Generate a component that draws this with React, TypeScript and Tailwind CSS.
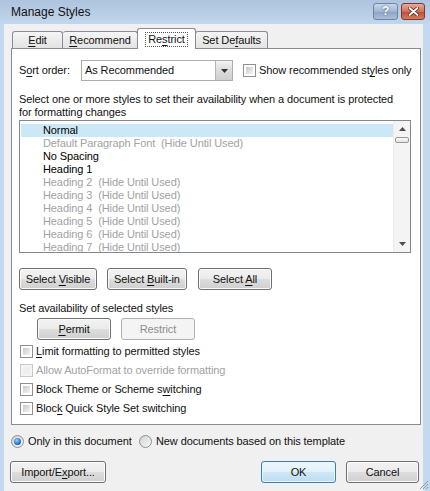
import React from "react"

const btnFace =
  "bg-[linear-gradient(to_bottom,#f3f3f3_0%,#ebebeb_48%,#dddddd_52%,#cfcfcf_100%)] shadow-[inset_0_0_0_1px_#fbfbfb]"

function Btn({
  children,
  w,
  disabled,
  primary,
}: {
  children: React.ReactNode
  w: string
  disabled?: boolean
  primary?: boolean
}) {
  if (disabled) {
    return (
      <div
        className={`${w} h-[22px] flex items-center justify-center rounded-[3px] border border-[#adb2b5] bg-[#f4f4f4] text-[#8d8d8d]`}
      >
        {children}
      </div>
    )
  }
  if (primary) {
    return (
      <div
        className={`${w} h-[22px] flex items-center justify-center rounded-[3px] border border-[#3c7fb1] bg-[linear-gradient(to_bottom,#eef7fc_0%,#e1f1fa_48%,#cfe7f5_52%,#bcdcef_100%)] shadow-[inset_0_0_0_1px_#e6f4fb]`}
      >
        {children}
      </div>
    )
  }
  return (
    <div
      className={`${w} h-[22px] flex items-center justify-center rounded-[3px] border border-[#707070] ${btnFace}`}
    >
      {children}
    </div>
  )
}

function Check({ disabled }: { disabled?: boolean }) {
  return (
    <div
      className={`w-[13px] h-[13px] shrink-0 border ${
        disabled ? "border-[#c9c9c9] bg-[#f4f4f4]" : "border-[#8f8f8f] bg-white"
      } p-[2px]`}
    >
      <div
        className={`w-full h-full ${
          disabled ? "bg-[#eeeeee]" : "bg-[linear-gradient(135deg,#c4c8ce,#f5f5f5)]"
        }`}
      />
    </div>
  )
}

function Radio({ on }: { on?: boolean }) {
  return (
    <div className="w-[13px] h-[13px] shrink-0 rounded-full border border-[#8f8f8f] bg-[linear-gradient(135deg,#d0d3d8,#f6f6f6)] flex items-center justify-center">
      {on && (
        <div className="w-[7px] h-[7px] rounded-full bg-[radial-gradient(circle_at_40%_35%,#8fd3ff,#1b60b8_70%)]" />
      )}
    </div>
  )
}

const U = ({ children }: { children: React.ReactNode }) => (
  <span className="underline underline-offset-[2px]">{children}</span>
)

const items: { name: string; hidden?: boolean }[] = [
  { name: "Normal" },
  { name: "Default Paragraph Font", hidden: true },
  { name: "No Spacing" },
  { name: "Heading 1" },
  { name: "Heading 2", hidden: true },
  { name: "Heading 3", hidden: true },
  { name: "Heading 4", hidden: true },
  { name: "Heading 5", hidden: true },
  { name: "Heading 6", hidden: true },
  { name: "Heading 7", hidden: true },
]

export default function App() {
  return (
    <div className="relative w-[430px] h-[491px] overflow-hidden flex flex-col bg-[#c4d8ee] text-[11px] leading-[13px] tracking-[-0.1px] text-[#111] font-['Liberation_Sans',Arial,sans-serif]">
      {/* Title bar */}
      <div className="h-[24px] shrink-0 flex items-center pl-[11px] pr-[5px] bg-[linear-gradient(to_bottom,#adc4de,#c2d6ec)]">
        <span className="flex-1 text-[12px] tracking-normal">Manage Styles</span>
        <div className="w-[25px] h-[17px] -mt-[2px] rounded-[3px] border border-[#6d839f] bg-[linear-gradient(to_bottom,#c9d8ea,#9fb6d1_50%,#8aa3c3_52%,#a9c0db)] flex items-center justify-center text-white text-[12px] font-bold [text-shadow:0_0_2px_#38506f]">
          ?
        </div>
        <div className="w-[24px] h-[17px] -mt-[2px] ml-[3px] rounded-[3px] border border-[#7a3a2c] bg-[linear-gradient(to_bottom,#e9a99a,#d0705a_50%,#bd4d35_52%,#d97a5f)] flex items-center justify-center">
          <svg width="11" height="9" viewBox="0 0 11 9">
            <path d="M1.5 1 L9.5 8 M9.5 1 L1.5 8" stroke="#5a2418" strokeWidth="3.4" strokeLinecap="round" />
            <path d="M1.5 1 L9.5 8 M9.5 1 L1.5 8" stroke="#fff" strokeWidth="1.8" strokeLinecap="round" />
          </svg>
        </div>
      </div>

      {/* Client area */}
      <div className="flex-1 flex flex-col ml-[4px] mr-[7px] bg-[#f0f0f0]">
        {/* Tabs */}
        <div className="mt-[4px] ml-[7px] h-[20px] flex items-end pl-[1px]">
          <div className="w-[51px] h-[17px] flex items-center justify-center rounded-t-[3px] border border-b-0 border-[#898c95] bg-[linear-gradient(to_bottom,#f5f5f5,#e3e3e3)]">
            <span><U>E</U>dit</span>
          </div>
          <div className="w-[75px] h-[17px] flex items-center justify-center rounded-t-[3px] border border-b-0 border-l-0 border-[#898c95] bg-[linear-gradient(to_bottom,#f5f5f5,#e3e3e3)]">
            <span><U>R</U>ecommend</span>
          </div>
          <div className="relative z-10 w-[59px] h-[21px] -mb-px -ml-px flex items-center justify-center rounded-t-[3px] border border-b-0 border-[#898c95] bg-white">
            <span className="px-[2px] outline outline-1 outline-dotted outline-[#555]">Re<U>s</U>trict</span>
          </div>
          <div className="w-[73px] h-[17px] -ml-px flex items-center justify-center rounded-t-[3px] border border-b-0 border-[#898c95] bg-[linear-gradient(to_bottom,#f5f5f5,#e3e3e3)]">
            <span>Set De<U>f</U>aults</span>
          </div>
        </div>

        {/* Panel */}
        <div className="ml-[7px] mr-[2px] h-[377px] border border-[#898c95] bg-white flex flex-col pl-[7px]">
          {/* Sort row */}
          <div className="mt-[11px] h-[21px] flex items-center">
            <span className="w-[62px]">S<U>o</U>rt order:</span>
            <div className="w-[152px] h-[21px] flex border border-[#abadb3] bg-white">
              <span className="flex-1 pl-[3px] self-center">As Recommended</span>
              <div className="w-[17px] h-full border-l border-[#b4b6ba] bg-[linear-gradient(to_bottom,#f2f2f2,#dcdcdc_50%,#cfcfcf)] flex items-center justify-center">
                <svg width="7" height="4" viewBox="0 0 7 4">
                  <path d="M0 0 H7 L3.5 4 Z" fill="#333" />
                </svg>
              </div>
            </div>
            <div className="ml-[10px]">
              <Check />
            </div>
            <span className="ml-[3px]">Show recommended st<U>y</U>les only</span>
          </div>

          {/* Description */}
          <div className="mt-[12px] whitespace-nowrap">
            Select one or more styles to set their availability when a document is protected
            <br />
            for formatting changes
          </div>

          {/* List */}
          <div className="mt-[1px] w-[392px] h-[133px] border border-[#828790] flex overflow-hidden">
            <div className="flex-1 pt-[3px] pl-[1px]">
              {items.map((it, i) => (
                <div
                  key={it.name}
                  className={`h-[13px] pl-[22px] whitespace-pre ${
                    i === 0 ? "bg-[#cce8f6]" : ""
                  } ${it.hidden ? "text-[#a2a2a2]" : "text-black"}`}
                >
                  {it.hidden ? `${it.name}  (Hide Until Used)` : it.name}
                </div>
              ))}
            </div>
            <div className="w-[17px] h-full bg-[#f4f4f4] border-l border-[#ececec] flex flex-col items-center">
              <div className="h-[14px] flex items-center justify-center mt-[1px]">
                <svg width="7" height="4" viewBox="0 0 7 4">
                  <path d="M0 4 H7 L3.5 0 Z" fill="#4d4d4d" />
                </svg>
              </div>
              <div className="w-[14px] h-[6px] mt-[1px] rounded-[2px] border border-[#999] bg-[linear-gradient(to_bottom,#fafafa,#e2e2e2)]" />
              <div className="flex-1" />
              <div className="h-[14px] flex items-center justify-center mb-[1px]">
                <svg width="7" height="4" viewBox="0 0 7 4">
                  <path d="M0 0 H7 L3.5 4 Z" fill="#4d4d4d" />
                </svg>
              </div>
            </div>
          </div>

          {/* Select buttons */}
          <div className="mt-[15px] flex">
            <Btn w="w-[78px]">
              <span>Select <U>V</U>isible</span>
            </Btn>
            <div className="ml-[10px]">
              <Btn w="w-[80px]">
                <span>Select <U>B</U>uilt-in</span>
              </Btn>
            </div>
            <div className="ml-[11px]">
              <Btn w="w-[74px]">
                <span>Select <U>A</U>ll</span>
              </Btn>
            </div>
          </div>

          <div className="mt-[12px]">Set availability of selected styles</div>

          <div className="mt-[3px] ml-[18px] flex">
            <Btn w="w-[74px]">
              <span><U>P</U>ermit</span>
            </Btn>
            <div className="ml-[10px]">
              <Btn w="w-[74px]" disabled>
                Restrict
              </Btn>
            </div>
          </div>

          <div className="mt-[2px] flex flex-col pl-[1px]">
            <div className="h-[19px] flex items-center">
              <Check />
              <span className="ml-[3px]"><U>L</U>imit formatting to permitted styles</span>
            </div>
            <div className="h-[19px] flex items-center">
              <Check disabled />
              <span className="ml-[3px] text-[#a2a2a2]">Allow AutoFormat to override formatting</span>
            </div>
            <div className="h-[19px] flex items-center">
              <Check />
              <span className="ml-[3px]">Block Theme or Scheme s<U>w</U>itching</span>
            </div>
            <div className="h-[19px] flex items-center">
              <Check />
              <span className="ml-[3px]">Bloc<U>k</U> Quick Style Set switching</span>
            </div>
          </div>
        </div>

        {/* Radios */}
        <div className="mt-[10px] ml-[7px] h-[13px] flex items-center">
          <Radio on />
          <span className="ml-[4px] w-[111px]">Only in this document</span>
          <Radio />
          <span className="ml-[4px]">New documents based on this template</span>
        </div>

        {/* Bottom buttons */}
        <div className="mt-[13px] ml-[6px] flex">
          <Btn w="w-[96px]">
            <span>Import/E<U>x</U>port...</span>
          </Btn>
          <div className="flex-1" />
          <Btn w="w-[75px]" primary>
            OK
          </Btn>
          <div className="ml-[10px] mr-[4px]">
            <Btn w="w-[73px]">Cancel</Btn>
          </div>
        </div>
      </div>

      {/* Resize grip */}
      <svg className="absolute right-[1px] bottom-[1px]" width="11" height="11" viewBox="0 0 11 11">
        <path d="M10 2 L2 10 M10 5 L5 10 M10 8 L8 10" stroke="#8a9bb0" strokeWidth="1" />
      </svg>
    </div>
  )
}
